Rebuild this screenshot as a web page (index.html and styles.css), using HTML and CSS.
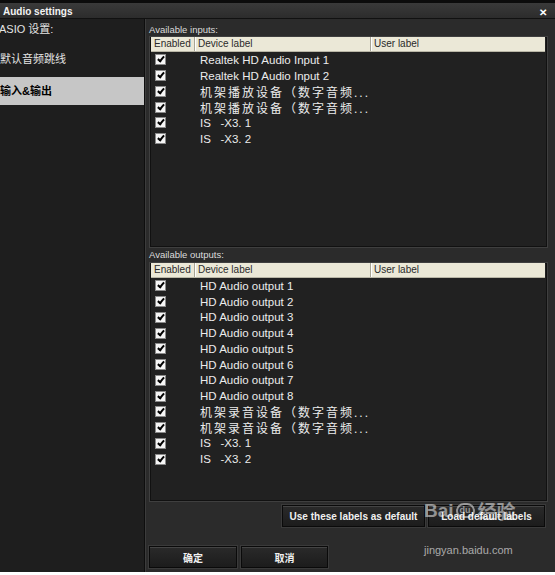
FILE: index.html
```html
<!DOCTYPE html>
<html>
<head>
<meta charset="utf-8">
<link rel="stylesheet" href="styles.css">
</head>
<body>
<div class="window">
  <div class="titlebar">
    <span class="title">Audio settings</span>
    <span class="close">✕</span>
  </div>
  <div class="content">
    <div class="sidebar">
      <div class="nav-item first">ASIO 设置:</div>
      <div class="nav-item second">默认音频跳线</div>
      <div class="nav-item active">输入&amp;输出</div>
    </div>
    <div class="main">
      <div class="section-label">Available inputs:</div>
      <div class="table inputs">
        <div class="thead">
          <div class="th c-en">Enabled</div>
          <div class="th c-dev">Device label</div>
          <div class="th c-user">User label</div>
        </div>
        <div class="tbody">
          <div class="row"><span class="cb"></span><span class="lbl">Realtek HD Audio Input 1</span></div>
          <div class="row"><span class="cb"></span><span class="lbl">Realtek HD Audio Input 2</span></div>
          <div class="row"><span class="cb"></span><span class="lbl cjk">机架播放设备（数字音频...</span></div>
          <div class="row"><span class="cb"></span><span class="lbl cjk">机架播放设备（数字音频...</span></div>
          <div class="row"><span class="cb"></span><span class="lbl">IS   -X3. 1</span></div>
          <div class="row"><span class="cb"></span><span class="lbl">IS   -X3. 2</span></div>
        </div>
      </div>
      <div class="section-label second">Available outputs:</div>
      <div class="table outputs">
        <div class="thead">
          <div class="th c-en">Enabled</div>
          <div class="th c-dev">Device label</div>
          <div class="th c-user">User label</div>
        </div>
        <div class="tbody">
          <div class="row"><span class="cb"></span><span class="lbl">HD Audio output 1</span></div>
          <div class="row"><span class="cb"></span><span class="lbl">HD Audio output 2</span></div>
          <div class="row"><span class="cb"></span><span class="lbl">HD Audio output 3</span></div>
          <div class="row"><span class="cb"></span><span class="lbl">HD Audio output 4</span></div>
          <div class="row"><span class="cb"></span><span class="lbl">HD Audio output 5</span></div>
          <div class="row"><span class="cb"></span><span class="lbl">HD Audio output 6</span></div>
          <div class="row"><span class="cb"></span><span class="lbl">HD Audio output 7</span></div>
          <div class="row"><span class="cb"></span><span class="lbl">HD Audio output 8</span></div>
          <div class="row"><span class="cb"></span><span class="lbl cjk">机架录音设备（数字音频...</span></div>
          <div class="row"><span class="cb"></span><span class="lbl cjk">机架录音设备（数字音频...</span></div>
          <div class="row"><span class="cb"></span><span class="lbl">IS   -X3. 1</span></div>
          <div class="row"><span class="cb"></span><span class="lbl">IS   -X3. 2</span></div>
        </div>
      </div>
      <div class="label-buttons">
        <button class="btn btn-use">Use these labels as default</button>
        <button class="btn btn-load">Load default labels</button>
      </div>
      <div class="dialog-buttons">
        <button class="btn btn-ok">确定</button>
        <button class="btn btn-cancel">取消</button>
      </div>
    </div>
  </div>
  <div class="watermark">
    <div class="wm-logo">Bai<span class="wm-paw">du</span>经验</div>
    <div class="wm-url">jingyan.baidu.com</div>
  </div>
</div>
</body>
</html>
```
FILE: styles.css
```css
html, body {
  margin: 0;
  padding: 0;
  background: #ffffff;
}
body {
  width: 555px;
  height: 575px;
  overflow: hidden;
  font-family: "Liberation Sans", "Noto Sans CJK SC", sans-serif;
}
.window {
  position: relative;
  width: 555px;
  height: 572px;
  background: #2b2b2b;
  display: flex;
  flex-direction: column;
  border-top: 3px solid #0c0c0c;
  box-sizing: border-box;
}
.titlebar {
  height: 15px;
  background: linear-gradient(#3a3a3a, #2c2c2c);
  border-bottom: 1px solid #111;
  display: flex;
  align-items: center;
  justify-content: space-between;
  padding: 0 8px 0 3px;
  flex: none;
}
.title {
  color: #f2f2f2;
  font-weight: bold;
  font-size: 10px;
  margin-top: 1px;
}
.close {
  color: #ffffff;
  font-weight: bold;
  font-size: 10px;
  margin-top: 3px;
}
.content {
  flex: 1;
  display: flex;
  min-height: 0;
}
.sidebar {
  width: 144px;
  flex: none;
  background: #1e1e1e;
  border-right: 1px solid #0e0e0e;
  box-shadow: 1px 0 0 #3c3c3c;
  display: flex;
  flex-direction: column;
}
.nav-item {
  color: #e4e4e4;
  font-size: 11px;
  height: 30px;
  line-height: 30px;
  padding-left: 0;
  white-space: nowrap;
}
.nav-item.first {
  height: 21px;
  line-height: 21px;
  margin-left: -1px;
}
.nav-item.second {
  margin-top: 4px;
}
.nav-item.active {
  background: #c6c6c6;
  color: #000;
  font-weight: bold;
  height: 28px;
  line-height: 28px;
  margin-top: 3px;
}
.main {
  flex: 1;
  display: flex;
  flex-direction: column;
  padding: 0 7px 0 3px;
  margin-left: 1px;
}
.section-label {
  color: #dcdcdc;
  font-size: 9.5px;
  height: 17px;
  line-height: 22px;
  padding-left: 0;
}
.section-label.second {
  height: 14px;
  line-height: 14px;
}
.table {
  background: #212121;
  border: 1px solid #3f3f3f;
  box-shadow: inset 0 0 0 1px #111;
  display: flex;
  flex-direction: column;
  box-sizing: border-box;
}
.table.inputs { height: 212px; }
.table.outputs { height: 240px; }
.thead {
  display: flex;
  height: 14px;
  background: #ebe8d7;
  margin: 0 2px 0 1px;
  border-bottom: 1px solid #b9b6a6;
  flex: none;
}
.th {
  color: #2a2a2a;
  font-size: 10px;
  line-height: 14px;
  padding-left: 3px;
  border-right: 1px solid #a8a596;
  box-shadow: 1px 0 0 #ffffff;
  box-sizing: border-box;
}
.c-en { width: 44px; }
.c-dev { width: 176px; }
.c-user { flex: 1; border-right: none; box-shadow: none; }
.tbody {
  display: flex;
  flex-direction: column;
}
.row {
  height: 15.75px;
  display: flex;
  align-items: center;
}
.cb {
  width: 9px;
  height: 9px;
  background: #f6f6f6;
  border: 1px solid #8a8a8a;
  margin-left: 5px;
  position: relative;
  flex: none;
}
.cb::after {
  content: "";
  position: absolute;
  left: 3px;
  top: 0px;
  width: 2px;
  height: 5px;
  border: solid #000;
  border-width: 0 2px 2px 0;
  transform: rotate(40deg);
}
.lbl {
  color: #ececec;
  font-size: 11.5px;
  margin-left: 34px;
  white-space: pre;
}
.lbl.cjk {
  font-size: 12px;
  letter-spacing: 2px;
}
.label-buttons {
  display: flex;
  justify-content: flex-end;
  gap: 3px;
  margin-top: 3px;
  margin-right: 3px;
}
.dialog-buttons {
  display: flex;
  gap: 4px;
  margin-top: 19px;
}
.btn {
  height: 22px;
  background: linear-gradient(#2a2a2a, #1c1c1c);
  border: 1px solid #0a0a0a;
  box-shadow: inset 0 1px 0 #444, 0 0 0 1px #3a3a3a;
  color: #f0f0f0;
  font-family: "Liberation Sans", "Noto Sans CJK SC", sans-serif;
  font-weight: bold;
  font-size: 10px;
  padding: 0;
  margin: 0;
}
.btn-use { width: 143px; }
.btn-load { width: 117px; }
.btn-ok { width: 88px; }
.btn-cancel { width: 87px; }
.watermark {
  position: absolute;
  left: 424px;
  top: 494px;
  color: rgba(255, 255, 255, 0.5);
  pointer-events: none;
}
.wm-logo {
  font-size: 19px;
  font-weight: bold;
  display: flex;
  align-items: center;
}
.wm-paw {
  display: inline-block;
  font-size: 9px;
  border-radius: 8px 8px 7px 7px;
  border: 2px solid rgba(255,255,255,0.5);
  padding: 0 2px;
  line-height: 11px;
  margin: 0 3px 0 2px;
}
.wm-url {
  font-size: 11px;
  margin-top: 20px;
  color: rgba(255, 255, 255, 0.6);
}
```
